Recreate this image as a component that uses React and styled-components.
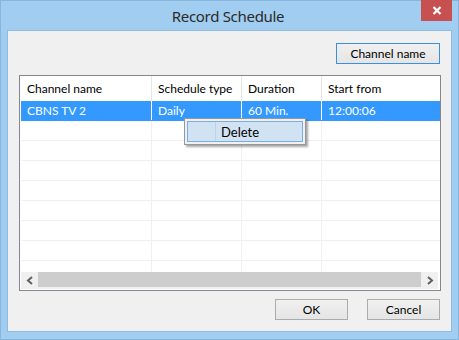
import React from 'react';
import styled, { createGlobalStyle } from 'styled-components';

const GlobalStyle = createGlobalStyle`
  html, body {
    margin: 0;
    padding: 0;
    background: #ffffff;
  }
  body {
    font-family: Lato, "Noto Sans", sans-serif;
  }
`;

// Window chrome
const Frame = styled.div`
  width: 459px;
  height: 340px;
  box-sizing: border-box;
  background: #a0cdf0;
  border: 1px solid #86b5dd;
  display: flex;
  flex-direction: column;
  padding: 0 6px 7px 6px;
`;

const TitleBar = styled.div`
  height: 29px;
  display: grid;
  grid-template-columns: 1fr auto 1fr;
  align-items: start;
`;

const Title = styled.div`
  grid-column: 2;
  padding-top: 5px;
  font-family: "Noto Sans", sans-serif;
  font-size: 15px;
  line-height: 20px;
  color: #2b2b2b;
  letter-spacing: -0.3px;
  margin-right: 3px;
`;

const CloseButton = styled.div`
  grid-column: 3;
  justify-self: end;
  margin-top: -1px;
  width: 31px;
  height: 21px;
  background: #c75050;
  display: flex;
  align-items: center;
  justify-content: center;
`;

const Client = styled.div`
  flex: 1;
  background: #f0f0f0;
  border: 1px solid #8fbbe0;
  display: flex;
  flex-direction: column;
  padding: 12px 11px 11px 11px;
  font-size: 12px;
  color: #000;
`;

const TopRow = styled.div`
  display: flex;
  justify-content: flex-end;
`;

const Button = styled.div`
  box-sizing: border-box;
  width: ${(p) => p.$w}px;
  height: 21px;
  border: 1px solid ${(p) => (p.$focused ? '#3c8fe0' : '#acacac')};
  background: linear-gradient(#f0f0f0, #e5e5e5);
  display: flex;
  align-items: center;
  justify-content: center;
  font-size: 12px;
  color: #000;
`;

// List view
const List = styled.div`
  position: relative;
  margin-top: 11px;
  margin-right: -1px;
  height: 216px;
  box-sizing: border-box;
  border: 1px solid #828790;
  background: #fff;
  padding: 0 0 1px 1px;
  display: flex;
  flex-direction: column;
`;

const HeaderRow = styled.div`
  display: grid;
  grid-template-columns: 131px 90px 80px 1fr;
  height: 25px;
`;

const HeaderCell = styled.div`
  border-right: 1px solid ${(p) => (p.$last ? 'transparent' : '#e5e5e5')};
  padding-left: 6px;
  display: flex;
  align-items: center;
`;

const Body = styled.div`
  flex: 1;
  overflow: hidden;
`;

const Row = styled.div`
  display: grid;
  grid-template-columns: 131px 90px 80px 1fr;
  height: 20px;
  box-sizing: border-box;
  background: ${(p) => (p.$selected ? '#3399ff' : '#fff')};
  color: ${(p) => (p.$selected ? '#fff' : '#000')};
  border-bottom: 1px solid ${(p) => (p.$selected ? '#3399ff' : '#f0f0f0')};
`;

const Cell = styled.div`
  border-right: 1px solid ${(p) => (p.$last ? 'transparent' : p.$selected ? '#ffffff' : '#f0f0f0')};
  padding-left: 6px;
  display: flex;
  align-items: center;
  white-space: nowrap;
`;

const ScrollBar = styled.div`
  height: 17px;
  margin-right: 2px;
  display: flex;
  background: #f0f0f0;
`;

const ArrowButton = styled.div`
  width: 17px;
  display: flex;
  align-items: center;
  justify-content: center;
  background: #f0f0f0;
`;

const Thumb = styled.div`
  flex: 1;
  margin-bottom: 2px;
  background: #cdcdcd;
`;

// Context menu
const Menu = styled.div`
  position: absolute;
  left: 164px;
  top: 42px;
  width: 122px;
  height: 27px;
  box-sizing: border-box;
  border: 1px solid #979797;
  background: #f0f0f0;
  padding: 2px;
  box-shadow: 2px 2px 2px rgba(0, 0, 0, 0.35);
`;

const MenuItem = styled.div`
  height: 21px;
  box-sizing: border-box;
  border: 1px solid #78aee5;
  background: #d1e2f2;
  display: flex;
  align-items: center;
`;

const Gutter = styled.div`
  width: 27px;
  align-self: stretch;
  border-right: 1px solid #bcd3ea;
`;

const MenuText = styled.span`
  padding-left: 5px;
  font-size: 13px;
  color: #000;
`;

const Footer = styled.div`
  margin-top: 8px;
  display: flex;
  justify-content: flex-end;
  gap: 19px;
`;

const rows = [
  { name: 'CBNS TV 2', type: 'Daily', duration: '60 Min.', start: '12:00:06', selected: true },
  {}, {}, {}, {}, {}, {}, {}, {},
];

const Chevron = ({ dir }) => (
  <svg width="8" height="9" viewBox="0 0 8 9">
    <polyline
      points={dir === 'left' ? '6,1 2,4.5 6,8' : '2,1 6,4.5 2,8'}
      fill="none"
      stroke="#606060"
      strokeWidth="2"
    />
  </svg>
);

export default function App() {
  return (
    <>
      <GlobalStyle />
      <Frame>
        <TitleBar>
          <Title>Record Schedule</Title>
          <CloseButton>
            <svg width="10" height="9" viewBox="0 0 10 9">
              <path d="M1.5 1 L8.5 8 M8.5 1 L1.5 8" stroke="#fff" strokeWidth="2.2" />
            </svg>
          </CloseButton>
        </TitleBar>
        <Client>
          <TopRow>
            <Button $w={104} $focused>Channel name</Button>
          </TopRow>
          <List>
            <HeaderRow>
              <HeaderCell>Channel name</HeaderCell>
              <HeaderCell>Schedule type</HeaderCell>
              <HeaderCell>Duration</HeaderCell>
              <HeaderCell $last>Start from</HeaderCell>
            </HeaderRow>
            <Body>
              {rows.map((r, i) => (
                <Row key={i} $selected={r.selected}>
                  <Cell $selected={r.selected}>{r.name}</Cell>
                  <Cell $selected={r.selected}>{r.type}</Cell>
                  <Cell $selected={r.selected}>{r.duration}</Cell>
                  <Cell $selected={r.selected} $last>{r.start}</Cell>
                </Row>
              ))}
            </Body>
            <ScrollBar>
              <ArrowButton><Chevron dir="left" /></ArrowButton>
              <Thumb />
              <ArrowButton><Chevron dir="right" /></ArrowButton>
            </ScrollBar>
            <Menu>
              <MenuItem>
                <Gutter />
                <MenuText>Delete</MenuText>
              </MenuItem>
            </Menu>
          </List>
          <Footer>
            <Button $w={73}>OK</Button>
            <Button $w={73}>Cancel</Button>
          </Footer>
        </Client>
      </Frame>
    </>
  );
}
